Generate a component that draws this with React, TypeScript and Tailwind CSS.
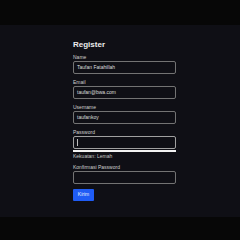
import React from 'react';

const fields = [
  { label: 'Name', value: 'Taufan Fatahillah' },
  { label: 'Email', value: 'taufan@bwa.com' },
  { label: 'Username', value: 'taufankoy' },
];

const App = () => {
  return (
    <div className="w-[240px] h-[240px] bg-[#070707] overflow-hidden" style={{ fontFamily: '"Liberation Sans", Arial, sans-serif' }}>
      <div className="h-[25px]" />
      <div className="h-[192px] bg-[#0f0f15] pt-[15px] pl-[73px]">
        <div className="w-[103px]">
          <h2 className="text-[8px] leading-[10px] font-bold text-[#ececec] mb-[4px]">Register</h2>

          {fields.map((f) => (
            <div key={f.label} className="mb-[5px]">
              <label className="block text-[5px] leading-[6px] text-[#cfcfcf] mb-[1px]">{f.label}</label>
              <div className="h-[13px] border border-[#737373] rounded-[2px] flex items-center px-[3px] text-[5px] text-[#dedede]">
                {f.value}
              </div>
            </div>
          ))}

          <div>
            <label className="block text-[5px] leading-[6px] text-[#cfcfcf] mb-[1px]">Password</label>
            <div className="h-[13px] border border-[#a0a0a0] rounded-[2px] flex items-center px-[3px]">
              <span className="w-[1px] h-[7px] bg-[#bdbdbd]" />
            </div>
            <div className="mt-[1px] h-[2px] bg-[#f2f2f2]" />
            <div className="mt-[1px] text-[5px] leading-[6px] text-[#c8c8c8]">Kekuatan: Lemah</div>
          </div>

          <div className="mt-[5px]">
            <label className="block text-[5px] leading-[6px] text-[#cfcfcf] mb-[1px]">Konfirmasi Password</label>
            <div className="h-[13px] border border-[#737373] rounded-[2px]" />
          </div>

          <button className="mt-[5px] h-[12px] w-[21px] bg-[#1f5cf5] rounded-[1px] text-[5px] text-[#e8eeff] flex items-center justify-center">
            Kirim
          </button>
        </div>
      </div>
    </div>
  );
};

export default App;
